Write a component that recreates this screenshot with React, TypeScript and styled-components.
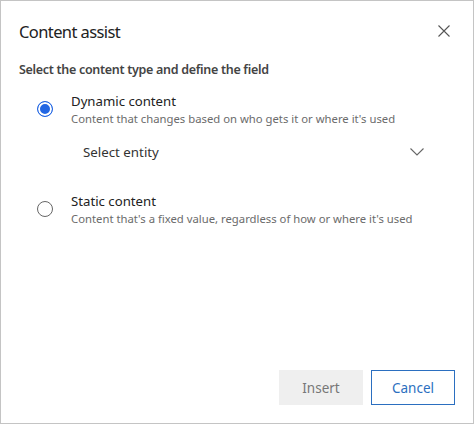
import React, { useState } from "react";
import styled, { createGlobalStyle } from "styled-components";

const GlobalStyle = createGlobalStyle`
  html, body {
    margin: 0;
    padding: 0;
    background: #ffffff;
    font-family: "Noto Sans", "Open Sans", sans-serif;
  }
`;

type Option = {
  id: string;
  title: string;
  description: string;
};

const options: Option[] = [
  {
    id: "dynamic",
    title: "Dynamic content",
    description: "Content that changes based on who gets it or where it's used",
  },
  {
    id: "static",
    title: "Static content",
    description: "Content that's a fixed value, regardless of how or where it's used",
  },
];

export default function App() {
  const [selected, setSelected] = useState("dynamic");

  return (
    <>
      <GlobalStyle />
      <Dialog>
        <Header>
          <Title>Content assist</Title>
          <CloseButton aria-label="Close">
            <svg width="12" height="12" viewBox="0 0 12 12">
              <path d="M0.5 0.5 L11.5 11.5 M11.5 0.5 L0.5 11.5" stroke="#555" strokeWidth="1.1" fill="none" />
            </svg>
          </CloseButton>
        </Header>
        <Label>Select the content type and define the field</Label>
        <OptionList>
          {options.map((opt) => (
            <OptionBlock key={opt.id}>
              <OptionRow onClick={() => setSelected(opt.id)}>
                <Radio checked={selected === opt.id} />
                <OptionText>
                  <OptionTitle>{opt.title}</OptionTitle>
                  <OptionDesc>{opt.description}</OptionDesc>
                </OptionText>
              </OptionRow>
              {opt.id === "dynamic" && selected === "dynamic" && (
                <EntitySelect>
                  <span>Select entity</span>
                  <svg width="14" height="8" viewBox="0 0 14 8">
                    <path d="M0.5 0.5 L7 7 L13.5 0.5" stroke="#666" strokeWidth="1.1" fill="none" />
                  </svg>
                </EntitySelect>
              )}
            </OptionBlock>
          ))}
        </OptionList>
        <Footer>
          <Button disabled>Insert</Button>
          <Button variant="outline">Cancel</Button>
        </Footer>
      </Dialog>
    </>
  );
}

const Dialog = styled.div`
  box-sizing: border-box;
  width: 474px;
  height: 424px;
  border: 1px solid #c4c4c4;
  background: #fff;
  display: flex;
  flex-direction: column;
  padding: 0 18px 18px 18px;
`;

const Header = styled.div`
  display: flex;
  align-items: center;
  justify-content: space-between;
  height: 60px;
`;

const Title = styled.h1`
  margin: 0;
  font-size: 16.5px;
  font-weight: 400;
  color: #222;
  letter-spacing: -0.6px;
`;

const CloseButton = styled.button`
  border: none;
  background: none;
  padding: 0;
  margin-right: 5px;
  display: flex;
  cursor: pointer;
`;

const Label = styled.div`
  font-size: 12.5px;
  font-weight: 600;
  color: #444;
  letter-spacing: -0.3px;
`;

const OptionList = styled.div`
  display: flex;
  flex-direction: column;
  gap: 31px;
  margin-top: 14px;
  padding-left: 18px;
`;

const OptionBlock = styled.div`
  display: flex;
  flex-direction: column;
`;

const OptionRow = styled.label`
  display: flex;
  align-items: flex-start;
  gap: 18px;
  cursor: pointer;
`;

const Radio = styled.span<{ checked: boolean }>`
  box-sizing: border-box;
  width: 16px;
  height: 16px;
  margin-top: 9px;
  border-radius: 50%;
  flex-shrink: 0;
  border: 1px solid ${(p) => (p.checked ? "#2266e3" : "#666")};
  background: ${(p) => (p.checked ? "#2266e3" : "#fff")};
  box-shadow: ${(p) => (p.checked ? "inset 0 0 0 2px #fff" : "none")};
`;

const OptionText = styled.div`
  display: flex;
  flex-direction: column;
  gap: 1px;
`;

const OptionTitle = styled.div`
  font-size: 13.2px;
  color: #222;
  line-height: 18px;
`;

const OptionDesc = styled.div`
  font-size: 11.3px;
  color: #6b6b6b;
  line-height: 16px;
`;

const EntitySelect = styled.div`
  display: flex;
  align-items: center;
  justify-content: space-between;
  margin: 16px 31px 0 46px;
  font-size: 13.3px;
  color: #333;
`;

const Footer = styled.div`
  margin-top: auto;
  display: flex;
  justify-content: flex-end;
  gap: 8px;
`;

const Button = styled.button<{ variant?: "outline" }>`
  box-sizing: border-box;
  width: 84px;
  height: 35px;
  font-family: inherit;
  font-size: 13.5px;
  background: ${(p) => (p.variant === "outline" ? "#fff" : "#efefef")};
  color: ${(p) => (p.variant === "outline" ? "#2b6fc0" : "#777")};
  border: ${(p) => (p.variant === "outline" ? "1px solid #2b6fc0" : "none")};
  cursor: pointer;
`;
